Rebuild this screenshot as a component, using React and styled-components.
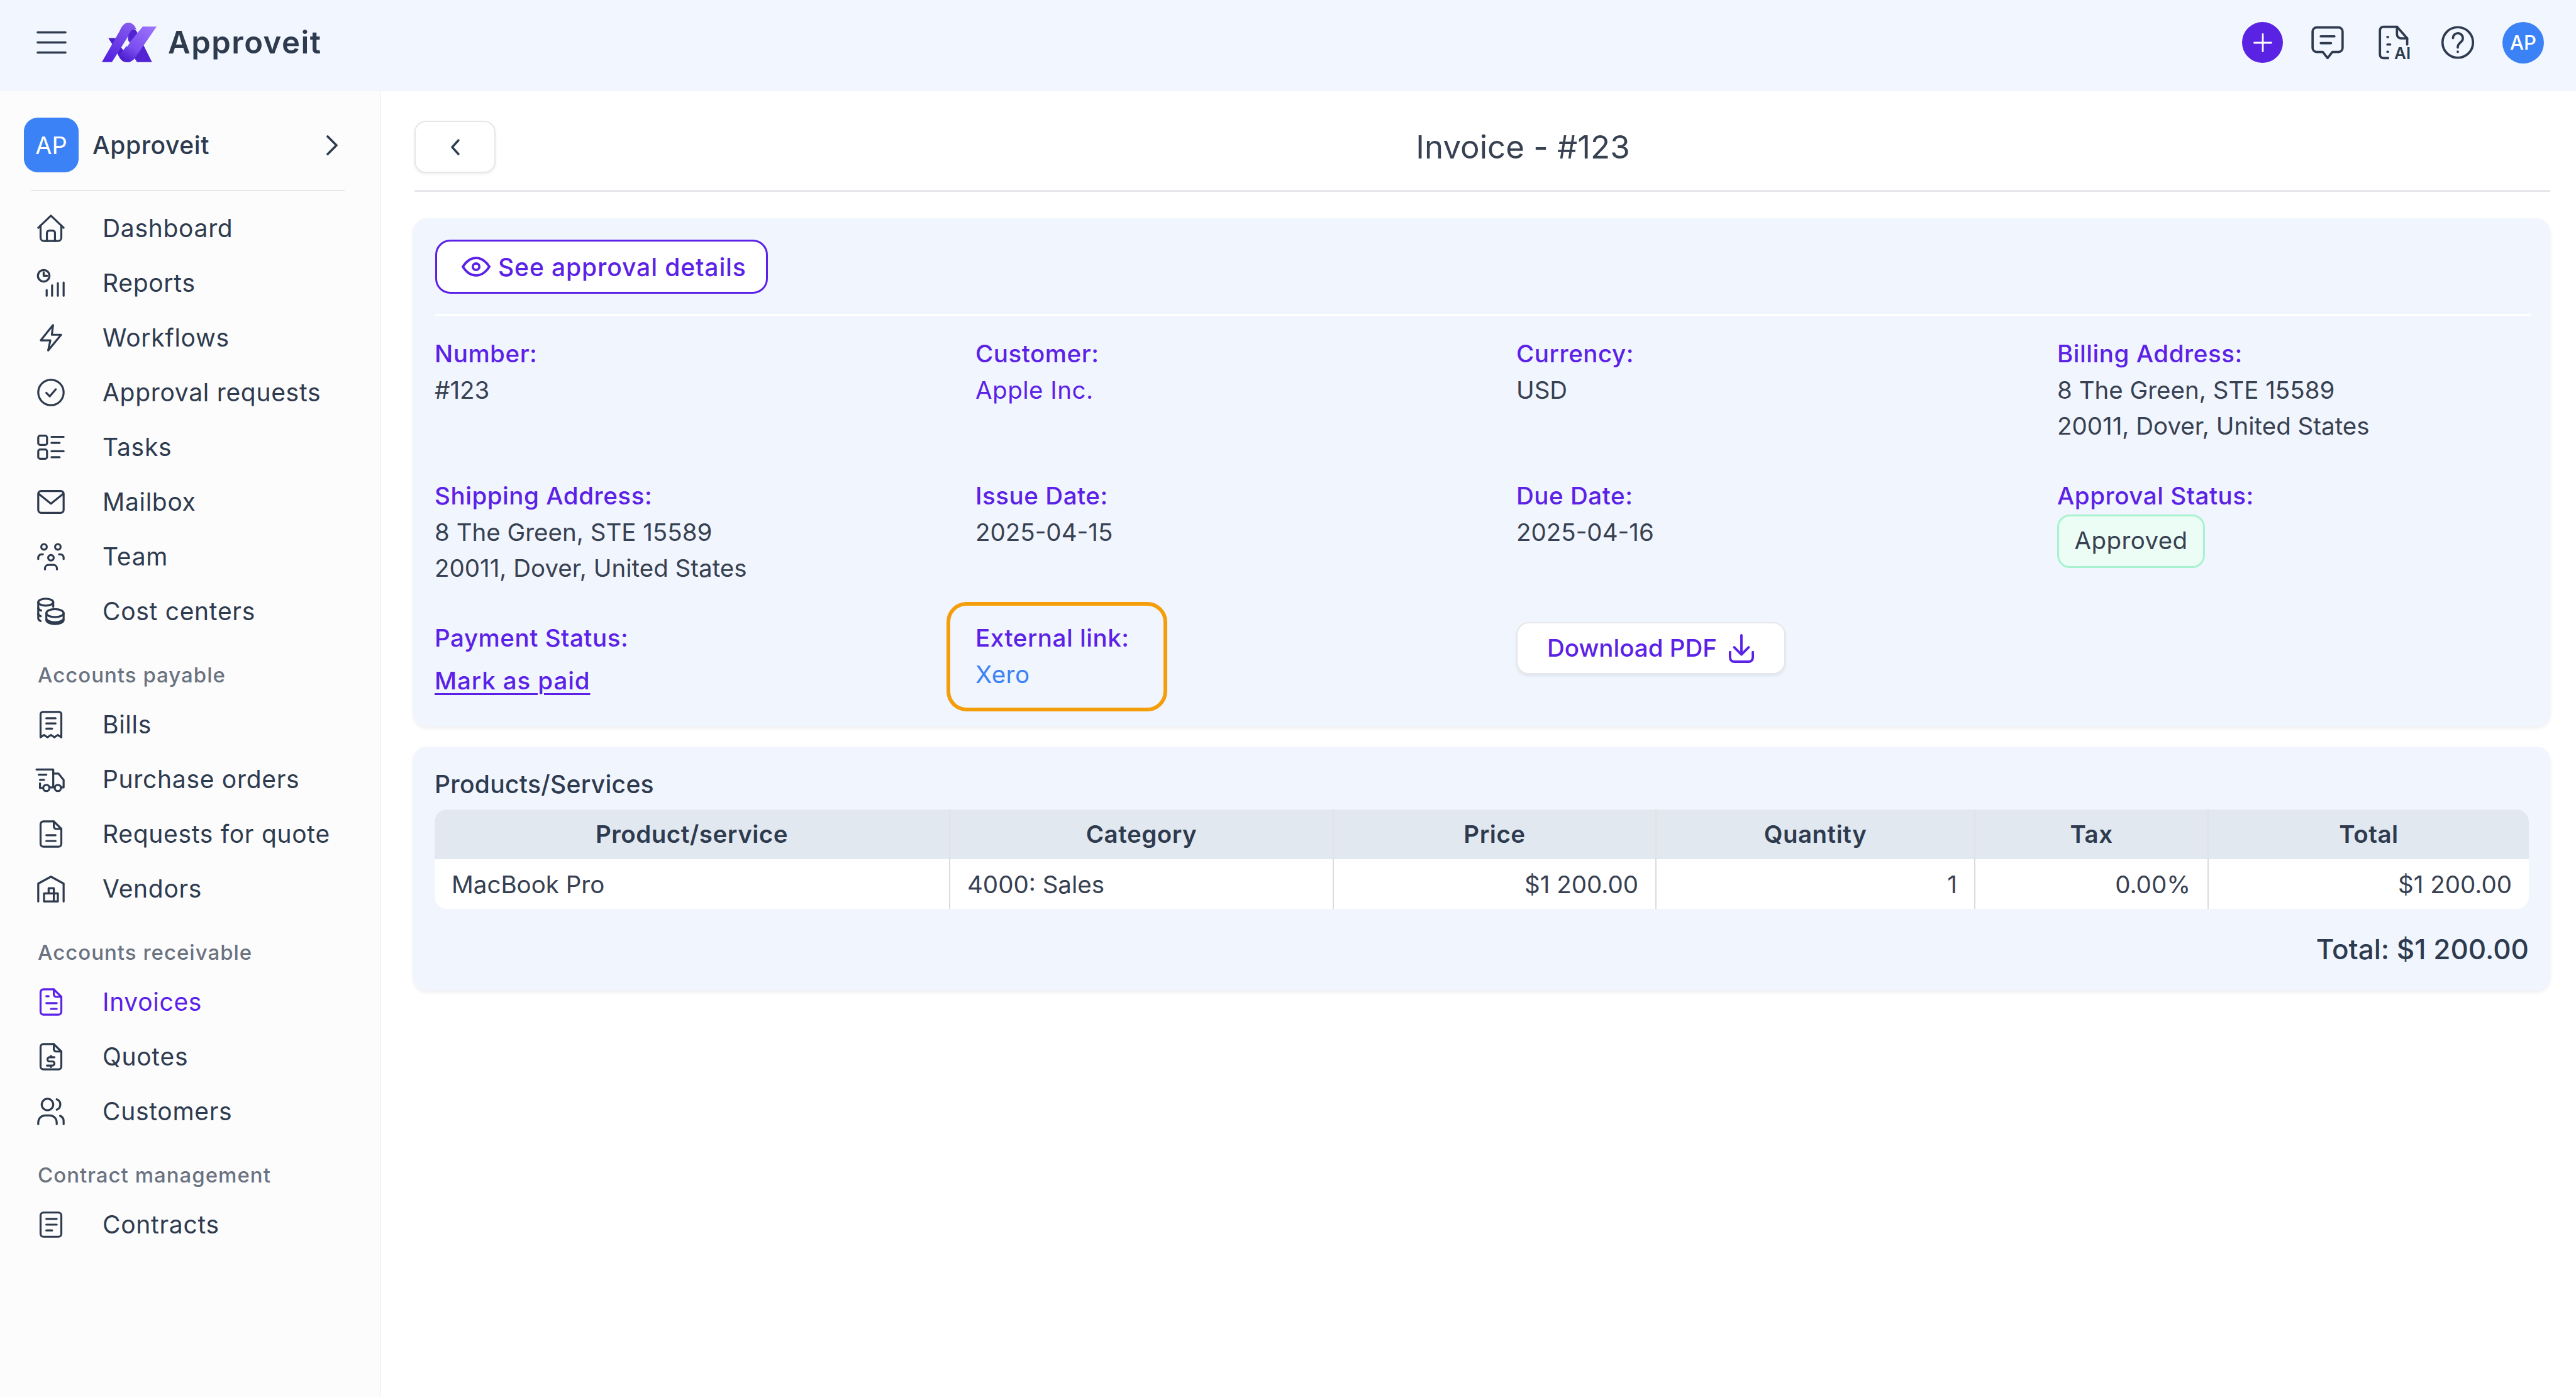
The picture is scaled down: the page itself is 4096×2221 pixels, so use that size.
import React from "react";
import styled, { createGlobalStyle } from "styled-components";

const INK = "#2e3b4e";
const PURPLE = "#5b21e6";
const FONT = `Inter, "Liberation Sans", sans-serif`;

const Global = createGlobalStyle`
  html, body { margin: 0; padding: 0; background: #fff; }
  body { font-family: ${FONT}; color: ${INK}; overflow: hidden; }
  * { box-sizing: border-box; }
`;

const Page = styled.div`
  width: 4096px; height: 2221px; display: flex; flex-direction: column; overflow: hidden; background: #fff;
`;
const TopBar = styled.header`
  height: 145px; flex: none; background: #f2f6ff; display: flex; align-items: center; padding: 0 51px 10px 58px;
`;
const Burger = styled.svg` width: 48px; height: 37px; flex: none; margin-right: 56px; `;
const Logo = styled.svg` width: 87px; height: 64px; flex: none; margin-right: 18px; `;
const Brand = styled.div` font-size: 49px; font-weight: 600; color: ${INK}; letter-spacing: 1.5px; `;
const TopIcons = styled.div` margin-left: auto; display: flex; align-items: center; `;
const PlusCircle = styled.div`
  width: 65px; height: 65px; border-radius: 50%; background: #5a22e2; display: flex; align-items: center; justify-content: center; margin-right: 45px;
`;
const TopIcon = styled.svg`
  width: 52px; height: 53px; margin-right: ${(p) => p.$gap}px; flex: none; overflow: visible;
  fill: none; stroke: ${INK}; stroke-width: 1.7; stroke-linecap: round; stroke-linejoin: round;
`;
const IconLabel = styled.text`
  font-family: ${FONT}; font-size: 12px; font-weight: 600; fill: ${INK}; stroke: none;
`;
const Avatar = styled.div`
  width: 66px; height: 66px; border-radius: 50%; background: #3b82f6; color: #fff; font-size: 31px; font-weight: 500;
  display: flex; align-items: center; justify-content: center;
`;
const Body = styled.div` flex: 1; display: flex; min-height: 0; `;
const Sidebar = styled.aside`
  width: 606px; flex: none; background: #fcfcfd; border-right: 2px solid #f3f4f6; padding: 42px 0 0 0;
`;
const Profile = styled.div` display: flex; align-items: center; padding: 0 66px 0 38px; height: 87px; `;
const ProfileBadge = styled.div`
  width: 87px; height: 87px; border-radius: 22px; background: #3b82f6; color: #fff; font-size: 38px; font-weight: 400;
  display: flex; align-items: center; justify-content: center; flex: none; margin-right: 22px;
`;
const ProfileName = styled.div` font-size: 39px; font-weight: 500; color: ${INK}; flex: 1; letter-spacing: 0.6px; `;
const Chev = styled.svg` width: 20px; height: 32px; flex: none; fill: none; stroke: ${INK}; stroke-width: 3.6; stroke-linecap: round; stroke-linejoin: round; `;
const SideRule = styled.div` height: 2px; background: #e5e7eb; margin: 28px 56px 15px 49px; `;
const GroupLabel = styled.div`
  height: 93px; padding: 22px 0 0 60px; display: flex; align-items: center; font-size: 33px; font-weight: 500; color: #6b7280; letter-spacing: 1px;
`;
const NavRow = styled.div`
  height: 87px; display: flex; align-items: center; padding-left: 59px; font-size: 39px; font-weight: 400; letter-spacing: 0.7px;
  color: ${(p) => (p.$active ? PURPLE : INK)};
`;
const NavGlyph = styled.svg`
  width: 44px; height: 44px; flex: none; margin-right: 60px; overflow: visible;
  fill: none; stroke: currentColor; stroke-width: 1.75; stroke-linecap: round; stroke-linejoin: round;
`;
const Main = styled.main` flex: 1; min-width: 0; padding: 0 41px 0 51px; `;
const TitleRow = styled.div` display: flex; align-items: center; padding: 47px 0 27px 2px; `;
const BackButton = styled.div`
  width: 129px; height: 83px; border-radius: 18px; background: #fff; border: 2px solid #e5e7eb; box-shadow: 0 2px 4px rgba(0,0,0,.07);
  display: flex; align-items: center; justify-content: center; flex: none;
`;
const Title = styled.h1` flex: 1; margin: 0; text-align: center; font-size: 51px; font-weight: 400; color: #374151; `;
const TopRule = styled.div` height: 3px; background: #e5e7eb; margin-left: 2px; `;
const Card = styled.section`
  background: #f1f5fe; border-radius: 22px; box-shadow: 0 3px 6px rgba(0,0,0,.07);
`;
const InfoCard = styled(Card)` margin-top: 42px; padding: 34px 31px 44px 35px; height: 808px; `;
const OutlineButton = styled.div`
  display: inline-flex; align-items: center; height: 86px; width: 529px; padding-left: 39px; border: 3px solid ${PURPLE};
  border-radius: 24px; background: #fff; color: ${PURPLE}; font-size: 39px; font-weight: 500; letter-spacing: 0.9px;
`;
const Eye = styled.svg`
  width: 46px; height: 32px; margin-right: 12px; flex: none; fill: none; stroke: ${PURPLE}; stroke-width: 2; stroke-linejoin: round;
`;
const WhiteRule = styled.div` height: 3px; background: #fff; margin-top: 32px; `;
const InfoGrid = styled.div`
  display: grid; grid-template-columns: 860px 860px 860px 1fr; grid-auto-rows: 172.5px; row-gap: 53.5px; margin-top: 32px; margin-left: -1px;
`;
const Cell = styled.div` position: relative; font-size: 38.5px; line-height: 57.5px; color: #374151; `;
const Label = styled.div` color: ${PURPLE}; font-weight: 500; letter-spacing: 0.55px; `;
const Value = styled.div` color: ${(p) => p.$color || "#374151"}; `;
const LinkValue = styled(Value)` letter-spacing: 0.5px; `;
const Mark = styled.a`
  display: block; margin-top: 10px; color: ${PURPLE}; font-weight: 500; letter-spacing: 0.9px; text-decoration: underline; text-underline-offset: 6px; text-decoration-thickness: 3px;
`;
const Highlight = styled.div`
  position: absolute; left: -46px; top: -29px; width: 351px; height: 174px; border: 6px solid #f59e0b; border-radius: 32px;
`;
const Pill = styled.div`
  display: inline-flex; align-items: center; justify-content: center; width: 235px; height: 85px; margin-top: 0; border: 3px solid #a7f3d0;
  border-radius: 20px; background: #ecfdf5; color: #374151; font-size: 38.5px; letter-spacing: 0.4px;
`;
const DownloadButton = styled.div`
  display: inline-flex; align-items: center; height: 83px; width: 428px; margin-top: 3px; padding-left: 47px; border-radius: 20px; background: #fff;
  border: 2px solid #e5e7eb; box-shadow: 0 3px 5px rgba(0,0,0,.07); color: ${PURPLE}; font-size: 38.5px; font-weight: 500;
`;
const DownloadIcon = styled.svg`
  width: 42px; height: 46px; margin-left: 18px; flex: none; fill: none; stroke: ${PURPLE}; stroke-width: 2; stroke-linecap: round; stroke-linejoin: round;
`;
const ProductsCard = styled(Card)` margin-top: 32px; padding: 31px 34px 37px 34px; `;
const SectionTitle = styled.div` font-size: 39px; line-height: 58px; font-weight: 500; color: ${INK}; margin-bottom: 11px; letter-spacing: 0.3px; `;
const Table = styled.div` border-radius: 20px; overflow: hidden; `;
const TableRow = styled.div`
  display: grid; grid-template-columns: 820px 610px 513px 507px 371px 1fr; height: 79px; background: ${(p) => (p.$head ? "#e2e8f0" : "#fff")};
`;
const TH = styled.div`
  display: flex; align-items: center; justify-content: center; padding-bottom: 2px; font-size: 38.5px; font-weight: 600; color: ${INK}; letter-spacing: 0.5px;
  border-right: 2px solid #dfe3e8; &:last-child { border-right: 0; }
`;
const TD = styled.div`
  display: flex; align-items: center; justify-content: ${(p) => (p.$right ? "flex-end" : "flex-start")}; padding: 0 27px; font-size: 38.5px; color: #374151;
  border-right: 2px solid #d8dbe0; &:last-child { border-right: 0; }
`;
const GrandTotal = styled.div`
  margin-top: 35px; text-align: right; font-size: 44px; line-height: 58px; font-weight: 500; color: ${INK};
`;

const fileBase = (
  <>
    <path d="M14.5 1H5.5a2.5 2.5 0 0 0-2.5 2.5v17A2.5 2.5 0 0 0 5.5 23h13a2.5 2.5 0 0 0 2.5-2.5V7.5z" />
    <path d="M14.5 1v4.5a2 2 0 0 0 2 2H21" />
  </>
);

const glyphs = {
  home: (<><path d="M1 11.5 12 1l11 10.5" /><path d="M3 9.5V20a3 3 0 0 0 3 3h12a3 3 0 0 0 3-3V9.5" /><path d="M8.5 23v-7a2 2 0 0 1 2-2h3a2 2 0 0 1 2 2v7" /></>),
  reports: (<><circle cx="5.7" cy="5.7" r="5" /><path d="M5.7 2.7v3h3" /><path d="M8.3 23v-5M13 23v-9M18 23v-11M23 23V11.5" /></>),
  zap: (<path d="M13.8 1 3.2 14.2h8.3L9.6 23l11.2-13.6h-8z" />),
  check: (<><circle cx="12" cy="12" r="11" /><path d="m8 12.3 3 3 5.2-6" /></>),
  tasks: (<><rect x="1" y="2" width="7.6" height="8" rx="1.6" /><rect x="1" y="14" width="7.6" height="8" rx="1.6" /><path d="M12.5 3h10.5M12.5 8.2h7M12.5 15.5h10.5M12.5 20.7h7" /></>),
  mail: (<><rect x="1" y="2.5" width="22" height="19" rx="2.5" /><path d="M1.5 5 12 13.5 22.5 5" /></>),
  team: (<><circle cx="6" cy="3.5" r="2.4" /><circle cx="18" cy="3.5" r="2.4" /><circle cx="12" cy="13" r="2.4" /><path d="M1 14v-1.2A2.8 2.8 0 0 1 3.800 10H5" /><path d="M23 14v-1.200A2.800 2.800 0 0 0 20.200 10H19" /><path d="M6.800 23v-.8a3 3 0 0 1 3-3h4.400a3 3 0 0 1 3 3v.8" /></>),
  cost: (<><ellipse cx="7.500" cy="4" rx="6.500" ry="3" /><path d="M1 4v14c0 1 .7 1.800 2 2.400" /><path d="M1 9c0 1 1 1.700 2.500 2.300M1 14c0 1 1 1.700 2.200 2.200M14 4v4" /><ellipse cx="15.500" cy="13.500" rx="7.500" ry="3.500" /><path d="M8 13.500v6c0 1.900 3.400 3.500 7.500 3.500s7.500-1.600 7.500-3.500v-6M8 18c0 1.900 3.400 3.500 7.500 3.500S23 19.900 23 18" /></>),
  bill: (<><path d="M3 23V3a2 2 0 0 1 2-2h14a2 2 0 0 1 2 2v20l-3-2-3 2-3-2-3 2-3-2z" /><path d="M8 6.500h8M8 11h8M8 15.500h5" /></>),
  truck: (<><path d="M-.5 3.500H14V19h-3" /><path d="M14 7h4.500l4.500 5.500V19h-2.500" /><circle cx="8" cy="19.500" r="2.700" /><circle cx="18" cy="19.500" r="2.700" /><path d="M1.500 8H8M2.500 12.500H6M2.500 15.500V19.500H5" /></>),
  file: (<>{fileBase}<path d="M8 13h8M8 18h8" /></>),
  vendor: (<><path d="M1 23V7.500L12 1.500l11 6V23" /><path d="M6 23v-7h12v7zM10 16v-4.500h4.500V23" /></>),
  invoice: (<>{fileBase}<path d="M8 7h2M8 13h9M12 18h5" /></>),
  quote: (<>{fileBase}<path d="M15 12.500h-4.200a1.700 1.700 0 0 0 0 3.600h2.400a1.700 1.700 0 0 1 0 3.600H8.500M12 11.200v1.300M12 19.700V21" /></>),
  users: (<><circle cx="9" cy="6" r="5" /><path d="M17 1.500a4.800 4.800 0 0 1 0 9" /><path d="M1 23v-1.500a6 6 0 0 1 6-6h4a6 6 0 0 1 6 6V23" /><path d="M20 15.800a5 5 0 0 1 3 4.700V23" /></>),
  contract: (<><rect x="3" y="1.500" width="18" height="21" rx="2.500" /><path d="M8 7h9M8 12h9M8 17h5" /></>),
};

const Nav = ({ icon, label, active }) => (
  <NavRow $active={active}>
    <NavGlyph viewBox="0 0 24 24">{glyphs[icon]}</NavGlyph>
    {label}
  </NavRow>
);

export default function App() {
  return (
    <Page>
      <Global />
      <TopBar>
        <Burger viewBox="0 0 48 37" fill="none" stroke={INK} strokeWidth="3.6" strokeLinecap="round">
          <path d="M2 2.500h44M2 18.500h44M2 34.500h44" />
        </Burger>
        <Logo viewBox="55 65 382 280">
          <defs>
            <linearGradient id="lgL" x1="0.7" y1="0" x2="0.2" y2="1">
              <stop offset="0" stopColor="#8559ee" />
              <stop offset="1" stopColor="#5320df" />
            </linearGradient>
            <linearGradient id="lgR" x1="0.9" y1="0" x2="0.2" y2="1">
              <stop offset="0" stopColor="#9b74fb" />
              <stop offset="0.65" stopColor="#7a4ef0" />
              <stop offset="1" stopColor="#4d1ecf" />
            </linearGradient>
          </defs>
          <path d="M240 130C255 100 290 100 305 140L405 340H300L235 235Z" fill="#5123d2" />
          <path d="M100 172H150L255 340H225C205 340 192 330 180 312L125 212Z" fill="#4c1fcb" />
          <path d="M55 340 178 125C195 85 215 65 240 65 265 65 285 85 296 112 265 100 250 130 235 165L125 340Z" fill="url(#lgL)" />
          <path d="M340 92H437L290 305C275 330 255 340 235 340 212 340 195 322 180 285Z" fill="url(#lgR)" />
          <path d="M232 178 250 205 232 232 215 205Z" fill="#f2f6ff" />
        </Logo>
        <Brand>Approveit</Brand>
        <TopIcons>
          <PlusCircle>
            <svg width="30" height="30" viewBox="0 0 30 30" fill="none" stroke="#fff" strokeWidth="2.800" strokeLinecap="round">
              <path d="M15 1.500v27M1.500 15h27" />
            </svg>
          </PlusCircle>
          <TopIcon $gap={54} viewBox="0 0 24 24">
            <path d="M4 1h16a3 3 0 0 1 3 3v12a3 3 0 0 1-3 3h-4.500L12 23.500 8.500 19H4a3 3 0 0 1-3-3V4a3 3 0 0 1 3-3Z" />
            <path d="M7 7.500h10M7 12.500h7.500" />
          </TopIcon>
          <TopIcon $gap={49} viewBox="0 0 24 24">
            <path d="M7.500 23.500H4A2.500 2.500 0 0 1 1.500 21V3A2.500 2.500 0 0 1 4 .5h10l7.500 8.500v4.500" />
            <path d="M14 .5V6a3 3 0 0 0 3 3h4.500" />
            <path d="M7 8h.4M7 13.500h2M7 18.800h.4" />
            <IconLabel x="12" y="24">AI</IconLabel>
          </TopIcon>
          <TopIcon $gap={45} viewBox="0 0 24 24">
            <circle cx="12" cy="12" r="11.200" />
            <path d="M8.500 8.800a3.600 3.600 0 1 1 6 2.700c-1.300 1.200-2.500 1.900-2.500 3.700v.5M12 18.700v.2" />
          </TopIcon>
          <Avatar>AP</Avatar>
        </TopIcons>
      </TopBar>
      <Body>
        <Sidebar>
          <Profile>
            <ProfileBadge>AP</ProfileBadge>
            <ProfileName>Approveit</ProfileName>
            <Chev viewBox="0 0 20 32"><path d="M3 2l14 14L3 30" /></Chev>
          </Profile>
          <SideRule />
          <Nav icon="home" label="Dashboard" />
          <Nav icon="reports" label="Reports" />
          <Nav icon="zap" label="Workflows" />
          <Nav icon="check" label="Approval requests" />
          <Nav icon="tasks" label="Tasks" />
          <Nav icon="mail" label="Mailbox" />
          <Nav icon="team" label="Team" />
          <Nav icon="cost" label="Cost centers" />
          <GroupLabel>Accounts payable</GroupLabel>
          <Nav icon="bill" label="Bills" />
          <Nav icon="truck" label="Purchase orders" />
          <Nav icon="file" label="Requests for quote" />
          <Nav icon="vendor" label="Vendors" />
          <GroupLabel>Accounts receivable</GroupLabel>
          <Nav icon="invoice" label="Invoices" active />
          <Nav icon="quote" label="Quotes" />
          <Nav icon="users" label="Customers" />
          <GroupLabel>Contract management</GroupLabel>
          <Nav icon="contract" label="Contracts" />
        </Sidebar>
        <Main>
          <TitleRow>
            <BackButton>
              <svg width="18" height="28" viewBox="0 0 18 28" fill="none" stroke={INK} strokeWidth="3.400" strokeLinecap="round" strokeLinejoin="round">
                <path d="M14 3 4 14l10 11" />
              </svg>
            </BackButton>
            <Title>Invoice - #123</Title>
          </TitleRow>
          <TopRule />
          <InfoCard>
            <OutlineButton>
              <Eye viewBox="0 0 24 16.500">
                <path d="M12 15.500c-4.800 0-8.300-2.900-11-7.200C3.700 4 7.200 1 12 1s8.300 3 11 7.300c-2.700 4.300-6.200 7.200-11 7.200Z" />
                <circle cx="12" cy="8.250" r="2.700" />
              </Eye>
              See approval details
            </OutlineButton>
            <WhiteRule />
            <InfoGrid>
              <Cell><Label>Number:</Label><Value>#123</Value></Cell>
              <Cell><Label>Customer:</Label><LinkValue $color={PURPLE}>Apple Inc.</LinkValue></Cell>
              <Cell><Label>Currency:</Label><Value>USD</Value></Cell>
              <Cell><Label>Billing Address:</Label><Value>8 The Green, STE 15589</Value><Value>20011, Dover, United States</Value></Cell>
              <Cell><Label>Shipping Address:</Label><Value>8 The Green, STE 15589</Value><Value>20011, Dover, United States</Value></Cell>
              <Cell><Label>Issue Date:</Label><Value>2025-04-15</Value></Cell>
              <Cell><Label>Due Date:</Label><Value>2025-04-16</Value></Cell>
              <Cell><Label>Approval Status:</Label><Pill>Approved</Pill></Cell>
              <Cell><Label>Payment Status:</Label><Mark>Mark as paid</Mark></Cell>
              <Cell><Highlight /><Label>External link:</Label><LinkValue $color="#3b82f6">Xero</LinkValue></Cell>
              <Cell>
                <DownloadButton>
                  Download PDF
                  <DownloadIcon viewBox="0 0 22 24">
                    <path d="M11 1v16M5 11l6 6 6-6" />
                    <path d="M1.500 15v4.500A3.500 3.500 0 0 0 5 23h12a3.500 3.500 0 0 0 3.500-3.500V15" />
                  </DownloadIcon>
                </DownloadButton>
              </Cell>
            </InfoGrid>
          </InfoCard>
          <ProductsCard>
            <SectionTitle>Products/Services</SectionTitle>
            <Table>
              <TableRow $head>
                <TH>Product/service</TH><TH>Category</TH><TH>Price</TH><TH>Quantity</TH><TH>Tax</TH><TH>Total</TH>
              </TableRow>
              <TableRow>
                <TD>MacBook Pro</TD><TD>4000: Sales</TD><TD $right>$1 200.00</TD><TD $right>1</TD><TD $right>0.00%</TD><TD $right>$1 200.00</TD>
              </TableRow>
            </Table>
            <GrandTotal>Total: $1 200.00</GrandTotal>
          </ProductsCard>
        </Main>
      </Body>
    </Page>
  );
}
